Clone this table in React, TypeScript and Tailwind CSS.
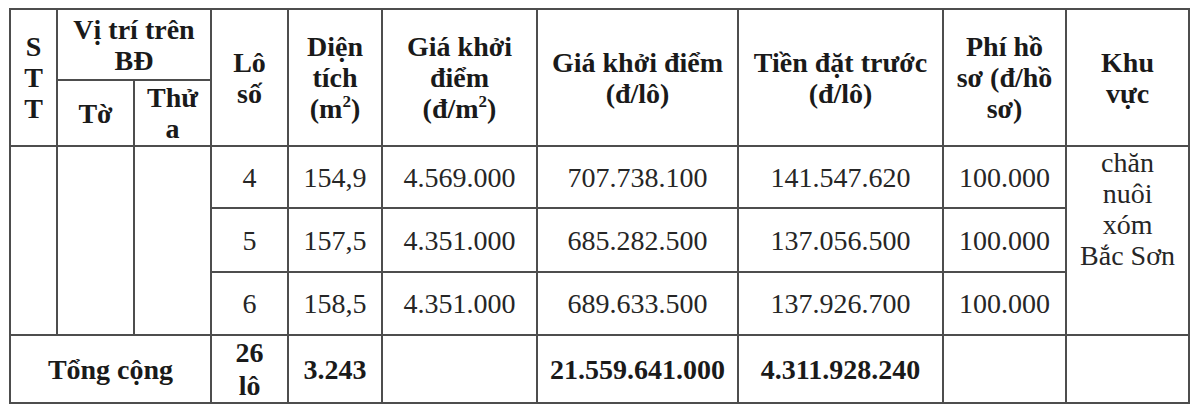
import React from 'react';

const cell = "border-2 border-[#4d4d4d] p-0 text-center align-middle font-['Liberation_Serif',serif]";

const rows = [
  { lo: '4', dt: '154,9', giaM2: '4.569.000', giaLo: '707.738.100', tien: '141.547.620', phi: '100.000', h: 'h-[62px]' },
  { lo: '5', dt: '157,5', giaM2: '4.351.000', giaLo: '685.282.500', tien: '137.056.500', phi: '100.000', h: 'h-[64px]' },
  { lo: '6', dt: '158,5', giaM2: '4.351.000', giaLo: '689.633.500', tien: '137.926.700', phi: '100.000', h: 'h-[63px]' },
];

const Sup = () => <sup className="text-[17px] -top-[11px]">2</sup>;

export default function App() {
  return (
    <div className="w-[1200px] h-[407px] bg-white pt-[8px] pl-[9px] overflow-hidden font-['Liberation_Serif',serif]">
      <table className="table-fixed border-collapse w-[1181px] text-[28px] leading-[31px] text-[#262626] font-['Liberation_Serif',serif]">
        <colgroup>
          <col className="w-[47px]" />
          <col className="w-[77px]" />
          <col className="w-[77px]" />
          <col className="w-[77px]" />
          <col className="w-[94px]" />
          <col className="w-[155px]" />
          <col className="w-[201px]" />
          <col className="w-[205px]" />
          <col className="w-[123px]" />
          <col className="w-[123px]" />
        </colgroup>
        <thead className="font-bold text-[#1a1a1a]">
          <tr className="h-[71px]">
            <th rowSpan={2} className={cell}>
              S<br />T<br />T
            </th>
            <th colSpan={2} className={cell}>
              Vị trí trên<br />BĐ
            </th>
            <th rowSpan={2} className={cell}>
              Lô<br />số
            </th>
            <th rowSpan={2} className={cell}>
              Diện<br />tích<br />(m<Sup />)
            </th>
            <th rowSpan={2} className={cell}>
              Giá khởi<br />điểm<br />(đ/m<Sup />)
            </th>
            <th rowSpan={2} className={cell}>
              Giá khởi điểm<br />(đ/lô)
            </th>
            <th rowSpan={2} className={cell}>
              Tiền đặt trước<br />(đ/lô)
            </th>
            <th rowSpan={2} className={cell}>
              Phí hồ<br />sơ (đ/hồ<br />sơ)
            </th>
            <th rowSpan={2} className={cell}>
              Khu<br />vực
            </th>
          </tr>
          <tr className="h-[66px]">
            <th className={cell}>Tờ</th>
            <th className={cell}>
              Thử<br />a
            </th>
          </tr>
        </thead>
        <tbody>
          {rows.map((r, i) => (
            <tr key={r.lo} className={r.h}>
              {i === 0 && (
                <>
                  <td rowSpan={3} className={cell}></td>
                  <td rowSpan={3} className={cell}></td>
                  <td rowSpan={3} className={cell}></td>
                </>
              )}
              <td className={cell}>{r.lo}</td>
              <td className={cell}>{r.dt}</td>
              <td className={cell}>{r.giaM2}</td>
              <td className={cell}>{r.giaLo}</td>
              <td className={cell}>{r.tien}</td>
              <td className={cell}>{r.phi}</td>
              {i === 0 && (
                <td rowSpan={3} className={`${cell} !align-top`}>
                  chăn<br />nuôi<br />xóm<br />Bắc Sơn
                </td>
              )}
            </tr>
          ))}
          <tr className="h-[68px] font-bold text-[#1a1a1a]">
            <td colSpan={3} className={cell}>Tổng cộng</td>
            <td className={`${cell} leading-[33px]`}>
              26<br />lô
            </td>
            <td className={cell}>3.243</td>
            <td className={cell}></td>
            <td className={cell}>21.559.641.000</td>
            <td className={cell}>4.311.928.240</td>
            <td className={cell}></td>
            <td className={cell}></td>
          </tr>
        </tbody>
      </table>
    </div>
  );
}
